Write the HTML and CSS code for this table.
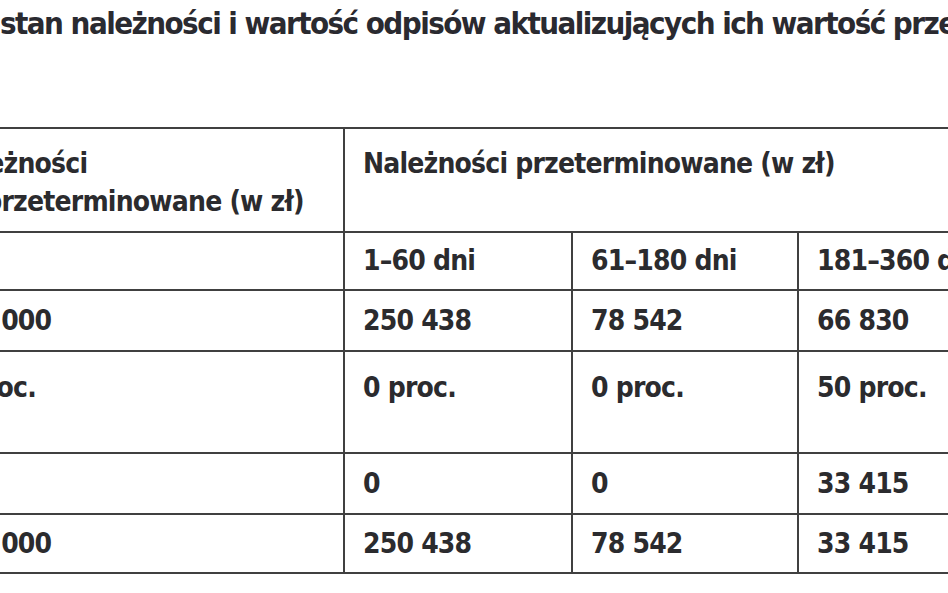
FILE: index.html
```html
<!DOCTYPE html>
<html lang="pl">
<head>
<meta charset="utf-8">
<link rel="stylesheet" href="styles.css">
</head>
<body>
<div class="page">
  <h1 class="title">stan należności i wartość odpisów aktualizujących ich wartość przeterminowanych</h1>
  <table class="grid">
    <colgroup>
      <col class="c1"><col class="c2"><col class="c3"><col class="c4"><col class="c5">
    </colgroup>
    <tr class="r-head">
      <th class="first">Należności<br>nieprzeterminowane (w zł)</th>
      <th colspan="4">Należności przeterminowane (w zł)</th>
    </tr>
    <tr class="r-sub">
      <td class="first"></td>
      <td>1–60 dni</td>
      <td>61–180 dni</td>
      <td>181–360 dni</td>
      <td>powyżej 360 dni</td>
    </tr>
    <tr class="r-std">
      <td class="first">500 000</td>
      <td>250 438</td>
      <td>78 542</td>
      <td>66 830</td>
      <td>10 000</td>
    </tr>
    <tr class="r-tall">
      <td class="first">0 proc.</td>
      <td>0 proc.</td>
      <td>0 proc.</td>
      <td>50 proc.</td>
      <td>100 proc.</td>
    </tr>
    <tr class="r-std">
      <td class="first">0</td>
      <td>0</td>
      <td>0</td>
      <td>33 415</td>
      <td>10 000</td>
    </tr>
    <tr class="r-last">
      <td class="first">500 000</td>
      <td>250 438</td>
      <td>78 542</td>
      <td>33 415</td>
      <td>0</td>
    </tr>
  </table>
</div>
</body>
</html>
```

FILE: styles.css
```css
html, body {
  margin: 0;
  padding: 0;
  background: #ffffff;
}

body {
  width: 948px;
  height: 593px;
  overflow: hidden;
}

.page {
  width: 1400px;
  font-family: "DejaVu Sans Condensed", "DejaVu Sans", sans-serif;
  font-stretch: condensed;
  color: #2b2b2e;
}

.title {
  margin: 0;
  padding: 5px 0 0 0;
  font-size: 31px;
  line-height: 36px;
  letter-spacing: -1.55px;
  font-weight: bold;
  white-space: nowrap;
  color: #2a2a30;
}

.grid {
  margin: 86px 0 0 -77px;
  border-collapse: collapse;
  table-layout: fixed;
  width: 1363px;
  font-size: 28px;
  letter-spacing: -0.8px;
  font-weight: bold;
}

.c1 { width: 420px; }
.c2 { width: 228px; }
.c3 { width: 226px; }
.c4 { width: 226px; }
.c5 { width: 263px; }

.grid th,
.grid td {
  border: 2px solid #404040;
  padding: 0 0 0 18px;
  text-align: left;
  vertical-align: middle;
  white-space: nowrap;
  font-weight: bold;
  line-height: 36px;
}

.grid .r-head th {
  vertical-align: top;
  height: 104px;
  padding-top: 16px;
  line-height: 38px;
  box-sizing: border-box;
}

.r-sub td { height: 56px; }
.r-std td { height: 59px; }
.r-last td { height: 57px; }

.r-tall td {
  vertical-align: top;
  height: 102px;
  padding-top: 18px;
  box-sizing: border-box;
}
```
